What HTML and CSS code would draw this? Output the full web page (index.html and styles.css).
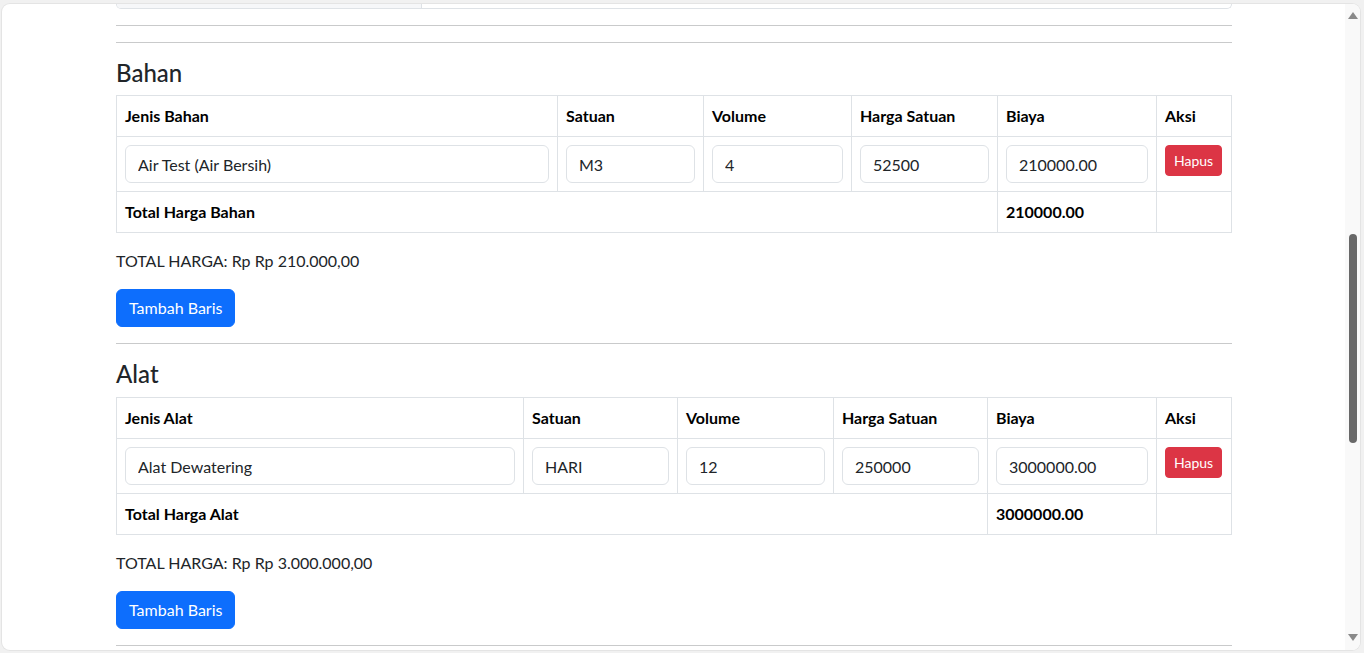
FILE: index.html
```html
<!DOCTYPE html>
<html lang="id">
<head>
<meta charset="utf-8">
<title>RAB</title>
<link rel="stylesheet" href="styles.css">
</head>
<body>
<div class="window">
  <div class="viewport">
    <div class="container">
      <div class="prev-group"><div class="prev-addon"></div><div class="prev-field"></div></div>
      <hr class="rule">
      <hr class="rule">

      <h4 class="section-title">Bahan</h4>
      <table class="grid bahan">
        <colgroup><col class="w1"><col class="w2"><col class="w3"><col class="w4"><col class="w5"><col class="w6"></colgroup>
        <thead>
          <tr><th>Jenis Bahan</th><th>Satuan</th><th>Volume</th><th>Harga Satuan</th><th>Biaya</th><th>Aksi</th></tr>
        </thead>
        <tbody>
          <tr>
            <td><input class="field" type="text" value="Air Test (Air Bersih)"></td>
            <td><input class="field" type="text" value="M3"></td>
            <td><input class="field" type="text" value="4"></td>
            <td><input class="field" type="text" value="52500"></td>
            <td><input class="field" type="text" value="210000.00"></td>
            <td><button class="btn-del" type="button">Hapus</button></td>
          </tr>
        </tbody>
        <tfoot>
          <tr><td colspan="4" class="strong">Total Harga Bahan</td><td class="strong">210000.00</td><td></td></tr>
        </tfoot>
      </table>
      <p class="total">TOTAL HARGA: Rp Rp 210.000,00</p>
      <button class="btn-add" type="button">Tambah Baris</button>
      <hr class="rule">

      <h4 class="section-title">Alat</h4>
      <table class="grid alat">
        <colgroup><col class="w1"><col class="w2"><col class="w3"><col class="w4"><col class="w5"><col class="w6"></colgroup>
        <thead>
          <tr><th>Jenis Alat</th><th>Satuan</th><th>Volume</th><th>Harga Satuan</th><th>Biaya</th><th>Aksi</th></tr>
        </thead>
        <tbody>
          <tr>
            <td><input class="field" type="text" value="Alat Dewatering"></td>
            <td><input class="field" type="text" value="HARI"></td>
            <td><input class="field" type="text" value="12"></td>
            <td><input class="field" type="text" value="250000"></td>
            <td><input class="field" type="text" value="3000000.00"></td>
            <td><button class="btn-del" type="button">Hapus</button></td>
          </tr>
        </tbody>
        <tfoot>
          <tr><td colspan="4" class="strong">Total Harga Alat</td><td class="strong">3000000.00</td><td></td></tr>
        </tfoot>
      </table>
      <p class="total">TOTAL HARGA: Rp Rp 3.000.000,00</p>
      <button class="btn-add" type="button">Tambah Baris</button>
      <hr class="rule">
    </div>
  </div>
  <div class="scrollbar">
    <svg class="arrow up" width="10" height="7" viewBox="0 0 10 7"><path d="M5 0 L10 7 L0 7 Z" fill="#8a8a8a"/></svg>
    <div class="thumb"></div>
    <div class="spacer"></div>
    <svg class="arrow down" width="10" height="7" viewBox="0 0 10 7"><path d="M0 0 L10 0 L5 7 Z" fill="#8a8a8a"/></svg>
  </div>
</div>
</body>
</html>
```
FILE: styles.css
```css
* { box-sizing: border-box; }
html, body { margin: 0; padding: 0; }
body {
  background: #f1f1f1;
  height: 653px;
  overflow: hidden;
  font-family: Lato, "Liberation Sans", sans-serif;
  font-size: 16px;
  line-height: 1.5;
  color: #212529;
}
.window {
  margin: 4px 4px 0 2px;
  height: 646px;
  background: #fff;
  border-radius: 8px;
  box-shadow: 0 0 0 1px #e4e4e4;
  display: flex;
  overflow: hidden;
}
.viewport {
  flex: 1;
  overflow: hidden;
  padding: 0 113px 0 114px;
}
.container { width: 1116px; }

.prev-group {
  display: flex;
  height: 4.6px;
  border: 1px solid #dee2e6;
  border-top: none;
  border-radius: 0 0 6px 6px;
  overflow: hidden;
}
.prev-addon { width: 305px; background: #f6f7f9; border-right: 1px solid #dee2e6; }
.prev-field { flex: 1; }

.rule {
  margin: 16px 0;
  border: 0;
  border-top: 1px solid #c9cacb;
  height: 0;
}
.section-title {
  margin: 0 0 8px;
  font-size: 24px;
  font-weight: 500;
  line-height: 28.8px;
  color: #212529;
}

.grid {
  width: 1115px;
  table-layout: fixed;
  border-collapse: collapse;
  margin-bottom: 16px;
  color: #000;
  vertical-align: top;
}
.grid th, .grid td {
  border: 1px solid #dee2e6;
  padding: 8px;
  text-align: left;
  vertical-align: top;
  line-height: 24px;
}
.grid th, .grid .strong { font-weight: 700; }

.bahan .w1 { width: 441px; }
.bahan .w2 { width: 146px; }
.bahan .w3 { width: 148px; }
.bahan .w4 { width: 146px; }
.bahan .w5 { width: 159px; }
.bahan .w6 { width: 75px; }

.alat .w1 { width: 407px; }
.alat .w2 { width: 154px; }
.alat .w3 { width: 156px; }
.alat .w4 { width: 154px; }
.alat .w5 { width: 169px; }
.alat .w6 { width: 75px; }

.field {
  display: block;
  width: 100%;
  height: 38px;
  padding: 6px 12px;
  font: inherit;
  font-size: 16px;
  line-height: 24px;
  color: #212529;
  background: #fff;
  border: 1px solid #dee2e6;
  border-radius: 6px;
  outline: none;
}
.btn-del {
  display: inline-block;
  font-family: inherit;
  font-size: 14px;
  line-height: 21px;
  padding: 4px 8px;
  color: #fff;
  background: #dc3545;
  border: 1px solid #dc3545;
  border-radius: 4px;
}
.total { margin: 0 0 16px; line-height: 24px; }
.btn-add {
  display: inline-block;
  font-family: inherit;
  font-size: 16px;
  line-height: 24px;
  padding: 6px 12px;
  color: #fff;
  background: #0d6efd;
  border: 1px solid #0d6efd;
  border-radius: 6px;
  vertical-align: top;
}

.scrollbar {
  width: 15px;
  flex: none;
  background: #f9f9f9;
  display: flex;
  flex-direction: column;
  align-items: center;
}
.arrow { flex: none; display: block; }
.arrow.up { margin-top: 8px; }
.arrow.down { margin-bottom: 9px; }
.thumb {
  flex: none;
  width: 8px;
  height: 209px;
  margin-top: 215px;
  background: #686868;
  border-radius: 4px;
}
.spacer { flex: 1; }
```
